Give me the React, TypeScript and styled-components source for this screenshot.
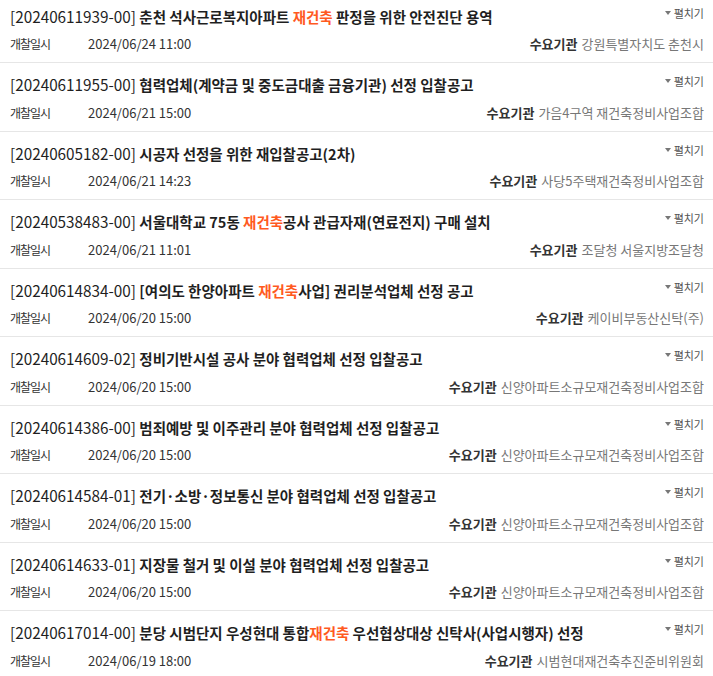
import React from 'react'
import styled, { createGlobalStyle } from 'styled-components'

type Item = {
  no: string
  title: React.ReactNode
  date: string
  agency: string
}

const GlobalStyle = createGlobalStyle`
  html, body {
    margin: 0;
    padding: 0;
    background: #fff;
  }
  body {
    font-family: "Noto Sans CJK KR", "Noto Sans", sans-serif;
    color: #222;
  }
`

const List = styled.ul`
  list-style: none;
  margin: -5.5px 0 0;
  padding: 0;
`

const Row = styled.li`
  box-sizing: border-box;
  height: 68.5px;
  padding: 11px 9px 0 10px;
  border-bottom: 1px solid #e6e6e6;
`

const TitleLine = styled.div`
  display: flex;
  align-items: flex-start;
  justify-content: space-between;
`

const Title = styled.div`
  font-size: 14.5px;
  line-height: 20px;
  font-weight: 700;
  color: #1f1f1f;
  white-space: nowrap;
`

const No = styled.span`
  font-size: 15.3px;
  font-weight: 400;
`

const Hot = styled.span`
  color: #ff5a1f;
`

const Toggle = styled.button`
  display: flex;
  align-items: center;
  gap: 3px;
  margin-top: 1px;
  border: 0;
  background: none;
  padding: 0;
  font-family: inherit;
  font-size: 11px;
  line-height: 12px;
  color: #555;
  cursor: pointer;
`

const Caret = styled.span`
  width: 0;
  height: 0;
  border-left: 3px solid transparent;
  border-right: 3px solid transparent;
  border-top: 4px solid #777;
`

const InfoLine = styled.div`
  display: flex;
  align-items: center;
  justify-content: space-between;
  margin-top: 8.5px;
  line-height: 18px;
  font-size: 13px;
  white-space: nowrap;
`

const DateBox = styled.div`
  display: flex;
  color: #333;
`

const Label = styled.span`
  width: 78px;
  font-size: 12px;
  letter-spacing: -1px;
  color: #333;
`

const Agency = styled.div`
  font-size: 13px;
  color: #777;
`

const AgencyLabel = styled.b`
  font-weight: 700;
  color: #333;
  margin-right: 4px;
`

const items: Item[] = [
  {
    no: '20240611939-00',
    title: (
      <>
        춘천 석사근로복지아파트 <Hot>재건축</Hot> 판정을 위한 안전진단 용역
      </>
    ),
    date: '2024/06/24 11:00',
    agency: '강원특별자치도 춘천시',
  },
  {
    no: '20240611955-00',
    title: '협력업체(계약금 및 중도금대출 금융기관) 선정 입찰공고',
    date: '2024/06/21 15:00',
    agency: '가음4구역 재건축정비사업조합',
  },
  {
    no: '20240605182-00',
    title: '시공자 선정을 위한 재입찰공고(2차)',
    date: '2024/06/21 14:23',
    agency: '사당5주택재건축정비사업조합',
  },
  {
    no: '20240538483-00',
    title: (
      <>
        서울대학교 75동 <Hot>재건축</Hot>공사 관급자재(연료전지) 구매 설치
      </>
    ),
    date: '2024/06/21 11:01',
    agency: '조달청 서울지방조달청',
  },
  {
    no: '20240614834-00',
    title: (
      <>
        [여의도 한양아파트 <Hot>재건축</Hot>사업] 권리분석업체 선정 공고
      </>
    ),
    date: '2024/06/20 15:00',
    agency: '케이비부동산신탁(주)',
  },
  {
    no: '20240614609-02',
    title: '정비기반시설 공사 분야 협력업체 선정 입찰공고',
    date: '2024/06/20 15:00',
    agency: '신양아파트소규모재건축정비사업조합',
  },
  {
    no: '20240614386-00',
    title: '범죄예방 및 이주관리 분야 협력업체 선정 입찰공고',
    date: '2024/06/20 15:00',
    agency: '신양아파트소규모재건축정비사업조합',
  },
  {
    no: '20240614584-01',
    title: '전기·소방·정보통신 분야 협력업체 선정 입찰공고',
    date: '2024/06/20 15:00',
    agency: '신양아파트소규모재건축정비사업조합',
  },
  {
    no: '20240614633-01',
    title: '지장물 철거 및 이설 분야 협력업체 선정 입찰공고',
    date: '2024/06/20 15:00',
    agency: '신양아파트소규모재건축정비사업조합',
  },
  {
    no: '20240617014-00',
    title: (
      <>
        분당 시범단지 우성현대 통합<Hot>재건축</Hot> 우선협상대상 신탁사(사업시행자) 선정
      </>
    ),
    date: '2024/06/19 18:00',
    agency: '시범현대재건축추진준비위원회',
  },
]

const App = () => {
  return (
    <>
      <GlobalStyle />
      <List>
        {items.map((item) => (
          <Row key={item.no}>
            <TitleLine>
              <Title>
                <No>[{item.no}]</No> {item.title}
              </Title>
              <Toggle type='button'>
                <Caret />
                펼치기
              </Toggle>
            </TitleLine>
            <InfoLine>
              <DateBox>
                <Label>개찰일시</Label>
                {item.date}
              </DateBox>
              <Agency>
                <AgencyLabel>수요기관</AgencyLabel>
                {item.agency}
              </Agency>
            </InfoLine>
          </Row>
        ))}
      </List>
    </>
  )
}

export default App
